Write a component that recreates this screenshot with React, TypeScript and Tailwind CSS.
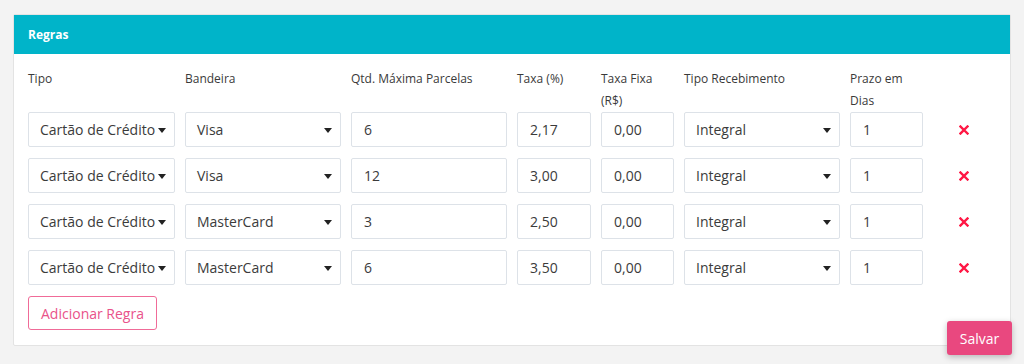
import React from 'react';

interface Regra {
  tipo: string;
  bandeira: string;
  parcelas: string;
  taxa: string;
  taxaFixa: string;
  recebimento: string;
  prazo: string;
}

const regras: Regra[] = [
  { tipo: 'Cartão de Crédito', bandeira: 'Visa', parcelas: '6', taxa: '2,17', taxaFixa: '0,00', recebimento: 'Integral', prazo: '1' },
  { tipo: 'Cartão de Crédito', bandeira: 'Visa', parcelas: '12', taxa: '3,00', taxaFixa: '0,00', recebimento: 'Integral', prazo: '1' },
  { tipo: 'Cartão de Crédito', bandeira: 'MasterCard', parcelas: '3', taxa: '2,50', taxaFixa: '0,00', recebimento: 'Integral', prazo: '1' },
  { tipo: 'Cartão de Crédito', bandeira: 'MasterCard', parcelas: '6', taxa: '3,50', taxaFixa: '0,00', recebimento: 'Integral', prazo: '1' },
];

const gridCols = 'grid grid-cols-[147px_156px_156px_74px_73px_156px_73px_40px] gap-x-[10px]';

function Caret() {
  return (
    <svg width="8" height="5" viewBox="0 0 8 5" className="absolute right-[8px] top-[15px]">
      <path d="M0 0h8L4 5z" fill="#222" />
    </svg>
  );
}

function SelectBox({ value }: { value: string }) {
  return (
    <div className="relative h-[35px] border border-[#dde2e8] rounded-[2px] bg-white flex items-center pl-[11px] text-[14px] text-[#3b3b3b] whitespace-nowrap overflow-hidden">
      {value}
      <Caret />
    </div>
  );
}

function InputBox({ value }: { value: string }) {
  return (
    <div className="h-[35px] border border-[#dde2e8] rounded-[2px] bg-white flex items-center pl-[12px] text-[14px] text-[#3b3b3b]">
      {value}
    </div>
  );
}

function RemoveIcon() {
  return (
    <svg width="10" height="10" viewBox="0 0 10 10">
      <path d="M1.5 1.5l7 7M8.5 1.5l-7 7" stroke="#ff1744" strokeWidth="2.4" strokeLinecap="square" />
    </svg>
  );
}

export default function App() {
  return (
    <div
      className="relative w-[1024px] h-[364px] bg-[#f3f3f3] pt-[14px] pl-[13px] pr-[13px]"
      style={{ fontFamily: '"Open Sans", "Noto Sans", sans-serif' }}
    >
      {/* Card */}
      <div className="bg-white border border-[#e3e3e3] rounded-[2px]">
        <div className="h-[39px] bg-[#00b4c9] flex items-center px-[14px]">
          <span className="text-white text-[12px] font-bold">Regras</span>
        </div>

        <div className="px-[14px] pt-[14px] pb-[15px]">
          {/* Labels */}
          <div className={`${gridCols} h-[44px] text-[12px] leading-[22px] text-[#3a3a3a]`}>
            <div>Tipo</div>
            <div>Bandeira</div>
            <div>Qtd. Máxima Parcelas</div>
            <div>Taxa (%)</div>
            <div>Taxa Fixa (R$)</div>
            <div>Tipo Recebimento</div>
            <div>Prazo em Dias</div>
            <div />
          </div>

          {/* Rows */}
          <div className="flex flex-col gap-[11px]">
            {regras.map((regra, index) => (
              <div key={index} className={gridCols}>
                <SelectBox value={regra.tipo} />
                <SelectBox value={regra.bandeira} />
                <InputBox value={regra.parcelas} />
                <InputBox value={regra.taxa} />
                <InputBox value={regra.taxaFixa} />
                <SelectBox value={regra.recebimento} />
                <InputBox value={regra.prazo} />
                <div className="flex items-center justify-end pr-[4px]">
                  <RemoveIcon />
                </div>
              </div>
            ))}
          </div>

          <button className="mt-[11px] h-[34px] w-[129px] border border-[#f06b98] rounded-[3px] text-[14px] text-[#e9528a] bg-white">
            Adicionar Regra
          </button>
        </div>
      </div>

      {/* Floating save button */}
      <button className="absolute left-[947px] top-[321px] w-[65px] h-[34px] bg-[#e9487f] text-white text-[14px] rounded-[3px] shadow-[0_2px_6px_rgba(0,0,0,0.25)]">
        Salvar
      </button>
    </div>
  );
}
